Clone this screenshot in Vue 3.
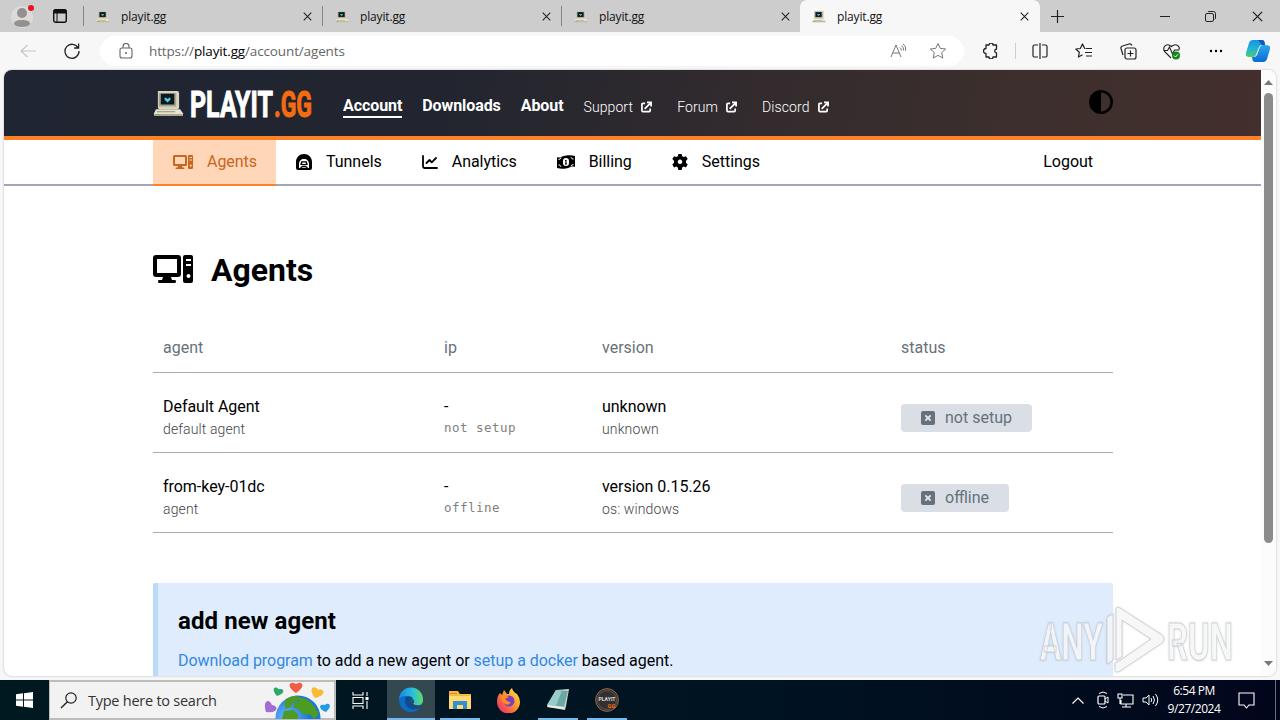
<template>
    <div class="desktop">
        <svg class="defs" width="0" height="0">
            <defs>
                <symbol id="computer" viewBox="0 0 32 28">
                    <path d="M5 1h20a2 2 0 0 1 2 2v15a2 2 0 0 1-2 2H7a2 2 0 0 1-2-2z" fill="#d9d4bd" />
                    <path d="M6 3h18v14H6z" fill="#a7a38e" />
                    <path d="M8 4h14v11H8z" fill="#0b1a1e" />
                    <path d="M12 8h2v1h2V8h2v2l-3 3-3-3z" fill="#55cde8" />
                    <path d="M3 20h25l3 4v3H1v-3z" fill="#e9e4cf" />
                    <path d="M1 25h30v2H1z" fill="#aaa58e" />
                    <path d="M4 22h19v1H4z" fill="#918d78" />
                    <path d="M3 25h4v1H3z" fill="#70b53b" />
                </symbol>
                <symbol id="agents" viewBox="0 0 40 28">
                    <path fill-rule="evenodd" fill="currentColor" d="M3 0h22a3 3 0 0 1 3 3v16a3 3 0 0 1-3 3h-7l1 3h3a1.600 1.600 0 0 1 0 3H6a1.600 1.600 0 0 1 0-3h3l1-3H3a3 3 0 0 1-3-3V3a3 3 0 0 1 3-3zm1 4v14h20V4zM32 0h6a2 2 0 0 1 2 2v24a2 2 0 0 1-2 2h-6a2 2 0 0 1-2-2V2a2 2 0 0 1 2-2zm1 4v2h5V4zm0 5v2h5V9zm2.500 10a2 2 0 1 0 .01 0z" />
                </symbol>
                <symbol id="tunnels" viewBox="0 0 16 16">
                    <path fill="currentColor" fill-rule="evenodd" d="M8 0c4.500 0 8 3.500 8 8v6a2 2 0 0 1-2 2H2a2 2 0 0 1-2-2V8c0-4.500 3.500-8 8-8zM8 5C5 5 3 7 3 10v4h10v-4c0-3-2-5-5-5z" />
                    <path fill="currentColor" d="M5.200 7.300h5.600l1 3.700H4.200z" />
                    <path fill="#fff" d="M6.500 8.500h3l.5 1.500H6z" />
                    <path stroke="currentColor" stroke-width="1.300" d="M4.500 14l2-1.500h3l2 1.500" fill="none" />
                </symbol>
                <symbol id="analytics" viewBox="0 0 16 16">
                    <path fill="none" stroke="currentColor" stroke-width="1.800" stroke-linecap="round" stroke-linejoin="round" d="M1 2v10.500c0 1 .5 1.500 1.500 1.500H15M4.500 9L7.500 6l2.300 2.300L14 4" />
                </symbol>
                <symbol id="billing" viewBox="0 0 18 16">
                    <path fill="currentColor" d="M0 3c3 1.500 5-.8 9-1.400 3-.5 6-.4 9 .4v11c-3-1.500-5 .8-9 1.400-3 .5-6 .4-9-.4z" />
                    <rect x="6" y="4" width="6" height="8" rx="3" fill="#fff" />
                    <path d="M8 6h1.500v3.500H10v1H8v-1h.4V7H8z" fill="currentColor" />
                    <path d="M1.500 5.500q2 0 2.500-2M16.500 10.500q-2 0-2.500 2M1.500 10.800q2 0 2.500 2M16.500 5.200q-2 0-2.500-2" stroke="#fff" fill="none" />
                </symbol>
                <symbol id="settings" viewBox="0 0 16 16">
                    <path fill="currentColor" fill-rule="evenodd" d="M6.300 0h3.400l.5 2.300 1.500.8 2.200-.8L15.700 5 14 6.700v2.100l1.700 1.700-1.800 2.900-2.200-.8-1.500.8-.5 2.600H6.300l-.5-2.600-1.500-.8-2.200.8L.3 10.500 2 8.800V6.700L.3 5l1.800-2.700 2.200.8 1.500-.8zM8 5.500a2.300 2.300 0 1 0 .01 0z" />
                </symbol>
                <symbol id="close" viewBox="0 0 10 10">
                    <path d="M.8.800l8.400 8.400M9.200.800L.8 9.200" stroke="#222" stroke-width="1.200" />
                </symbol>
            </defs>
        </svg>

        <div class="tabbar">
            <div class="profile">
                <svg width="24" height="26" viewBox="0 0 24 26">
                    <circle cx="11" cy="13" r="11" fill="#dedad7" />
                    <circle cx="11" cy="9" r="5" fill="#929090" />
                    <path d="M3 20c0-3 3-4 8-4s8 1 8 4c-1 2-4 3-8 3s-7-1-8-3z" fill="#929090" />
                    <circle cx="20" cy="4" r="3" fill="#e81123" />
                </svg>
                <svg width="14" height="14" viewBox="0 0 14 14">
                    <rect x=".7" y=".7" width="12.600" height="12.600" rx="2" fill="none" stroke="#111" stroke-width="1.400" />
                    <path d="M1 1h12v3H1zM4 4v9" fill="#111" stroke="#111" />
                </svg>
            </div>
            <div v-for="n in 4" :key="n" class="tab" :class="{ active: n === 4 }">
                <svg class="favicon"><use href="#computer" /></svg>
                <span>playit.gg</span>
                <svg class="close"><use href="#close" /></svg>
            </div>
            <div class="window-buttons">
                <svg width="15" height="15" viewBox="0 0 15 15"><path d="M7.500 1v13M1 7.500h13" stroke="#222" stroke-width="1.200" /></svg>
                <svg width="11" height="11" viewBox="0 0 11 11"><path d="M0 5.500h10" stroke="#222" /></svg>
                <svg width="11" height="11" viewBox="0 0 11 11"><rect x=".5" y="2.500" width="8" height="8" rx="1.500" fill="none" stroke="#222" /><path d="M3 1Q3 .5 4 .5h4.500a2 2 0 0 1 2 2V7q0 1-.8 1.300" fill="none" stroke="#222" /></svg>
                <svg width="11" height="11" viewBox="0 0 10 10"><use href="#close" /></svg>
            </div>
        </div>

        <div class="toolbar">
            <div class="history">
                <svg width="16" height="14" viewBox="0 0 16 14"><path d="M7.500 1L1 7l6.500 6M1 7h15" fill="none" stroke="#c4c4c4" stroke-width="1.100" /></svg>
                <svg width="16" height="16" viewBox="0 0 16 16"><path d="M14.200 5A7 7 0 1 0 15 8M14.600.5V5h-4.500" fill="none" stroke="#222" stroke-width="1.300" /></svg>
            </div>
            <div class="address">
                <svg width="14" height="16" viewBox="0 0 14 16"><rect x="1" y="5" width="12" height="10" rx="2" fill="none" stroke="#666" stroke-width="1.100" /><path d="M4 5V3.500a3 3 0 0 1 6 0V5" fill="none" stroke="#666" stroke-width="1.100" /><circle cx="7" cy="10" r="1" fill="#666" /></svg>
                <span class="url">https://<b>playit.gg</b>/account/agents</span>
                <svg width="17" height="16" viewBox="0 0 17 16"><path d="M1 14L6 2l5 12M2.700 10h6.600M10 4.500q1.500 1.200 1.200 3M11.500 2.500q2.600 2 2 5M13 .8q3.600 2.800 2.600 7" fill="none" stroke="#777" /></svg>
                <svg width="18" height="18" viewBox="0 0 18 18"><path d="M9 1.500l2.300 4.900 5.400.6-4 3.600 1.100 5.400L9 13.400 4.200 16l1.100-5.400-4-3.600 5.400-.6z" fill="none" stroke="#777" stroke-linejoin="round" /></svg>
            </div>
            <div class="tools">
                <svg width="16" height="16" viewBox="0 0 16 16"><path d="M3 2h3a2 2 0 0 1 4 0h3.500v4.200a1.700 1.700 0 0 0 0 3.600V14H10a2 2 0 0 1-4 0H3v-3.500a2.500 2.500 0 0 1 0-5z" fill="none" stroke="#222" stroke-width="1.300" stroke-linejoin="round" /></svg>
                <i class="divider"></i>
                <svg width="16" height="16" viewBox="0 0 16 16"><path d="M6 2H2.500a1.500 1.500 0 0 0-1.500 1.500v9A1.500 1.500 0 0 0 2.500 14H6M10 2h3.500A1.500 1.500 0 0 1 15 3.500v9a1.500 1.500 0 0 1-1.500 1.500H10M8 0v16" fill="none" stroke="#222" stroke-width="1.200" /></svg>
                <svg width="18" height="16" viewBox="0 0 18 16"><path d="M10.500 5.500H9.700L7.500 1 5.300 5.500.8 6l3.500 3.300L3.400 14l4.100-2.200M11 5.500h6M10 9.500h7M11 13h6" fill="none" stroke="#222" stroke-width="1.200" stroke-linejoin="round" /></svg>
                <svg width="17" height="17" viewBox="0 0 17 17"><rect x="5" y="5" width="11" height="11" rx="2" fill="none" stroke="#222" stroke-width="1.200" /><path d="M10.500 7.500v6M7.500 10.500h6M3 12L1 5.500Q.5 3.500 2.500 3L9 1q2-.5 3 1.500" fill="none" stroke="#222" stroke-width="1.200" /></svg>
                <svg width="18" height="17" viewBox="0 0 18 17"><path d="M8 15L1.500 8.500C-1 3.500 4-.5 8.500 3.500 13-.5 18 3.500 15.500 7.500M1 7.500h3.500L6.500 4l3 7 2-4h4" fill="none" stroke="#222" stroke-width="1.100" /><circle cx="13" cy="12.500" r="4" fill="#16851d" /><path d="M11 12.500l1.500 1.500 2.500-2.700" stroke="#fff" fill="none" /></svg>
                <svg width="16" height="4" viewBox="0 0 16 4"><circle cx="3" cy="2" r="1.200" /><circle cx="8" cy="2" r="1.200" /><circle cx="13" cy="2" r="1.200" /></svg>
                <svg width="24" height="24" viewBox="0 0 24 24">
                    <defs>
                        <linearGradient id="cop1" x1="0" y1="0" x2="0" y2="1"><stop stop-color="#1790e8" /><stop offset=".55" stop-color="#22b8cf" /><stop offset="1" stop-color="#52cb73" /></linearGradient>
                        <linearGradient id="cop2" x1="0" y1="0" x2="0" y2="1"><stop stop-color="#2fa8ec" /><stop offset="1" stop-color="#086bd5" /></linearGradient>
                    </defs>
                    <path d="M7 1h9q2 0 2.500 2L19 6h-3q-2 0-3 2l-3 8q-1 2-3 2H3q-4 0-3-4L3 4q1-3 4-3z" fill="url(#cop1)" />
                    <path d="M17 6h3q5 0 4 4l-3 10q-1 3-4 3H9q-2 0-2.500-2L6 18h2q2 0 3-2l3-8q1-2 3-2z" fill="url(#cop2)" />
                    <path d="M12 1h4q2 0 2.500 2L19 6h-3q-2-2-4-5z" fill="#1857ba" />
                </svg>
            </div>
        </div>

        <div class="viewport">
            <div class="page">
                <header class="site-header">
                    <div class="container header-row">
                        <svg class="logo" width="162" height="52" viewBox="0 -10 162 52">
                            <use href="#computer" x="0" y="2" width="31" height="27" />
                            <text class="logo-text" x="37" y="28.500" textLength="83" lengthAdjust="spacingAndGlyphs">PLAYIT</text>
                            <text class="logo-text accent" x="121" y="28.500" textLength="38" lengthAdjust="spacingAndGlyphs">.GG</text>
                        </svg>
                        <nav class="main-links">
                            <a class="current">Account</a>
                            <a>Downloads</a>
                            <a>About</a>
                        </nav>
                        <nav class="external-links">
                            <a v-for="link in externalLinks" :key="link">
                                <span>{{ link }}</span>
                                <svg width="11" height="12" viewBox="0 0 12 12"><path d="M4.500 2H2.200Q1 2 1 3.200v6.600Q1 11 2.200 11h6.600Q10 11 10 9.800V7.500M4 8l6-6M6.500 1H11v4.500" fill="none" stroke="#fff" stroke-width="1.900" /></svg>
                            </a>
                        </nav>
                        <svg class="contrast" width="24" height="24" viewBox="0 0 24 24"><circle cx="12" cy="12" r="10.700" fill="none" stroke="#000" stroke-width="2.600" /><path d="M12 1a11 11 0 0 0 0 22z" /></svg>
                    </div>
                </header>
                <div class="subnav">
                    <div class="container subnav-row">
                        <a v-for="item in sections" :key="item.label" :class="{ selected: item.label === 'Agents' }">
                            <svg :class="item.icon"><use :href="'#' + item.icon" /></svg>
                            <span>{{ item.label }}</span>
                        </a>
                        <a class="logout">Logout</a>
                    </div>
                </div>
                <main class="container content">
                    <h1><svg width="40" height="28"><use href="#agents" /></svg><span>Agents</span></h1>
                    <table>
                        <thead>
                            <tr><th>agent</th><th>ip</th><th>version</th><th>status</th></tr>
                        </thead>
                        <tbody>
                            <tr v-for="agent in agents" :key="agent.name">
                                <td><p>{{ agent.name }}</p><small>{{ agent.type }}</small></td>
                                <td><p>-</p><small class="mono">{{ agent.status }}</small></td>
                                <td><p>{{ agent.version }}</p><small>{{ agent.os }}</small></td>
                                <td>
                                    <span class="badge">
                                        <svg width="14" height="14" viewBox="0 0 14 14"><rect width="14" height="14" rx="2" fill="#66717c" /><path d="M4.300 4.300l5.400 5.400M9.700 4.300L4.300 9.700" stroke="#e2e8ed" stroke-width="1.800" /></svg>
                                        <span>{{ agent.status }}</span>
                                    </span>
                                </td>
                            </tr>
                        </tbody>
                    </table>
                    <section class="notice">
                        <h2>add new agent</h2>
                        <p><a>Download program</a> to add a new agent or <a>setup a docker</a> based agent.</p>
                    </section>
                </main>
            </div>
            <div class="scrollbar">
                <svg width="9" height="5" viewBox="0 0 9 5"><path d="M4.500 0L9 5H0z" fill="#777" /></svg>
                <div class="thumb"></div>
                <svg class="down" width="9" height="5" viewBox="0 0 9 5"><path d="M4.500 5L9 0H0z" fill="#777" /></svg>
            </div>
        </div>

        <svg class="watermark" width="214" height="74" viewBox="0 0 214 74">
            <g fill="#fff" fill-opacity=".75" stroke="#c4c6cb" stroke-opacity=".75">
                <text x="6" y="56" textLength="63" lengthAdjust="spacingAndGlyphs">ANY</text>
                <text x="133" y="56" textLength="66" lengthAdjust="spacingAndGlyphs">RUN</text>
                <path fill-rule="evenodd" d="M82 6q0-4 4-2l42 27q4 4 0 8L86 67q-5 3-5-2v-6l6-3 30-21-29-19v37l-6 3z" />
                <path d="M73 13l6-3v46l-6 4z" />
            </g>
        </svg>

        <footer class="taskbar">
            <div class="start">
                <svg width="17" height="16" viewBox="0 0 17 16"><path d="M0 2.300L7 1.300V7.500H0zM8 1.200L17 0v7.500H8zM0 8.500h7v6.200l-7-1zM8 8.500h9V16l-9-1.200z" fill="#fff" /></svg>
            </div>
            <div class="search">
                <svg width="18" height="17" viewBox="0 0 18 17"><circle cx="11" cy="6" r="5.200" fill="none" stroke="#222" stroke-width="1.200" /><path d="M7.400 9.700L1 16" stroke="#222" stroke-width="1.400" /></svg>
                <span>Type here to search</span>
                <svg class="globe" width="72" height="38" viewBox="0 0 72 38">
                    <defs><radialGradient id="sea" cx=".25"><stop stop-color="#71b7ff" /><stop offset="1" stop-color="#1978dc" /></radialGradient></defs>
                    <circle cx="36" cy="37" r="22.500" fill="url(#sea)" />
                    <path d="M23 19q7-5 13-4l-1 5-4 2-2 4-6 2zM34 16q12 0 18 9l5 8-5 5-4-5-6 1-6-6-5-1 2-5 4-2zM22 30l9-1 5 4v5H20z" fill="#4d9b22" />
                    <path d="M0 0C-8-5-5-10 0-7 5-10 8-5 0 0z" transform="translate(34 12) scale(1.300)" fill="#f05d45" />
                    <path d="M0 0C-8-5-5-10 0-7 5-10 8-5 0 0z" transform="translate(15 15) rotate(15)" fill="#2aa969" />
                    <path d="M0 0C-8-5-5-10 0-7 5-10 8-5 0 0z" transform="translate(53 17) rotate(20) scale(1.250)" fill="#f8b934" />
                    <path d="M0 0C-8-5-5-10 0-7 5-10 8-5 0 0z" transform="translate(4 31) rotate(40) scale(1.300)" fill="#a46bd2" />
                    <path d="M0 0C-8-5-5-10 0-7 5-10 8-5 0 0z" transform="translate(64 31) rotate(-10)" fill="#239ae5" />
                </svg>
            </div>
            <div class="app task-view">
                <svg width="17" height="17" viewBox="0 0 17 17"><path d="M1 0v3h10V0M1 17v-3h10v3M1 5.500h10v6H1zM15 0v4M15 9v8" fill="none" stroke="#fff" stroke-width="1.100" /><path d="M13.500 5h3v3h-3z" fill="#fff" /></svg>
            </div>
            <div class="app running focused">
                <svg width="26" height="26" viewBox="0 0 26 26">
                    <defs>
                        <linearGradient id="edge1"><stop stop-color="#1985dc" /><stop offset=".55" stop-color="#27bfe0" /><stop offset="1" stop-color="#62db65" /></linearGradient>
                    </defs>
                    <circle cx="13" cy="13" r="12" fill="#0b6bc5" />
                    <path d="M1 12A12 12 0 0 1 25 13c0 5-5 7-10 4-1-2 2-3 0-5C12 8 4 8 1 12z" fill="url(#edge1)" />
                    <path d="M8 10q4-2 7 1-3 1-2 4 3 5 11 3l-2 3Q12 25 8 18q-2-5 0-8z" fill="#114b8c" />
                    <path d="M14 12q4 2 1 5 4 3 10 1v2q-10 2-12-5z" fill="#344a53" />
                </svg>
            </div>
            <div class="app running">
                <svg width="22" height="20" viewBox="0 0 22 20"><path d="M0 1h9l2 3h11v15H0z" fill="#f4b93e" /><path d="M1 3h7v1H1z" fill="#e18c20" /><path d="M0 6h22v13H0z" fill="#ffda70" /><path d="M4 11h14v8h-4v-4H8v4H4z" fill="#3190d2" /></svg>
            </div>
            <div class="app">
                <svg width="25" height="25" viewBox="0 0 25 25">
                    <defs><linearGradient id="fox" x1="1" y1="0" x2="0" y2="1"><stop stop-color="#fff250" /><stop offset=".45" stop-color="#ff942a" /><stop offset="1" stop-color="#ed1973" /></linearGradient></defs>
                    <path d="M4 5l2 2 2-5 3 4h2q0-4 3-6 1 4 5 6 3 4 3 8a11.500 11.500 0 0 1-23 0q0-6 3-9z" fill="url(#fox)" />
                    <circle cx="13" cy="13" r="5.500" fill="#7940bd" /><path d="M5 8q5-1 8 1l-4 2q2 3 6 3-2 4-6 2-4-3-4-8z" fill="#ff8b22" />
                </svg>
            </div>
            <div class="app running">
                <svg width="24" height="24" viewBox="0 0 24 24"><path d="M10 2l13-1-3 17-1 4-18-3z" fill="#d2d7cb" /><path d="M10 2l12 1-4 16L1 17z" fill="#6aa8a8" /><path d="M10 2l6 .5-6 15.500-9-1z" fill="#9acaca" /><path d="M1 17l17 2v2L2 19z" fill="#e8eee9" /></svg>
            </div>
            <div class="app running">
                <svg width="24" height="24" viewBox="0 0 24 24"><circle cx="12" cy="12" r="11.400" fill="#34302f" stroke="#9c663d" /><circle cx="12" cy="12" r="9.500" fill="none" stroke="#555" /><text x="3.500" y="13" class="app-text" textLength="17" lengthAdjust="spacingAndGlyphs">PLAYIT</text><text x="12.500" y="20" class="app-text accent" textLength="8" lengthAdjust="spacingAndGlyphs">GG</text></svg>
            </div>
            <div class="tray">
                <svg width="12" height="7" viewBox="0 0 12 7"><path d="M.5 6.500L6 1l5.500 5.500" fill="none" stroke="#fff" stroke-width="1.200" /></svg>
                <svg width="12" height="18" viewBox="0 0 12 18"><rect x="1" y="5" width="7" height="8" rx="1" fill="none" stroke="#fff" stroke-width="1.200" /><path d="M8 8l3-2v6l-3-2M2 2.500q4-3 8 0M2 15.500q4 3 8 0" fill="none" stroke="#fff" /></svg>
                <svg width="17" height="15" viewBox="0 0 17 15"><path d="M6 2h10v9H4V7M9 11v3M5 14h9M1 1h4v4H1zM3 5v6" fill="none" stroke="#fff" stroke-width="1.100" /></svg>
                <svg width="17" height="16" viewBox="0 0 17 16"><path d="M1 6h3l3-3v10l-3-3H1zM9 6q1.500 2 0 4M11 4q3 4 0 8M13.500 2q4.500 6 0 12" fill="none" stroke="#fff" /></svg>
            </div>
            <div class="clock"><span>6:54 PM</span><span>9/27/2024</span></div>
            <svg class="notify" width="17" height="17" viewBox="0 0 17 17"><path d="M1 1h15v12h-5l-2.500 3L6 13H1z" fill="none" stroke="#fff" stroke-width="1.100" /></svg>
            <i class="show-desktop"></i>
        </footer>
    </div>
</template>

<script setup>
const externalLinks = ['Support', 'Forum', 'Discord'];

const sections = [
    { label: 'Agents', icon: 'agents' },
    { label: 'Tunnels', icon: 'tunnels' },
    { label: 'Analytics', icon: 'analytics' },
    { label: 'Billing', icon: 'billing' },
    { label: 'Settings', icon: 'settings' },
];

const agents = [
    { name: 'Default Agent', type: 'default agent', status: 'not setup', version: 'unknown', os: 'unknown' },
    { name: 'from-key-01dc', type: 'agent', status: 'offline', version: 'version 0.15.26', os: 'os: windows' },
];
</script>

<style>
body {
    overflow: hidden;
}
</style>

<style scoped>
* {
    box-sizing: border-box;
}

svg {
    display: block;
    flex-shrink: 0;
}

.defs {
    position: absolute;
}

.desktop {
    position: relative;
    width: 1280px;
    height: 720px;
    display: flex;
    flex-direction: column;
    background: #f7f7f7;
    font-family: "Open Sans", "Noto Sans", sans-serif;
    overflow: hidden;
}

.tabbar {
    display: flex;
    height: 32px;
    background: #cdcdcd;
    flex-shrink: 0;
}

.profile {
    width: 83px;
    display: flex;
    gap: 18px;
    padding: 4px 0 0 11px;
}

.profile svg:last-child {
    margin-top: 5px;
}

.tab {
    width: 239px;
    display: flex;
    align-items: center;
    padding: 0 10px 0 13px;
    font-size: 12px;
    color: #111;
    background: linear-gradient(#858585, #858585) left 6px / 1px 20px no-repeat;
}

.tab span {
    flex: 1;
    letter-spacing: -0.15px;
}

.tab.active {
    width: 240px;
    background: #f7f7f7;
    border-radius: 7px 7px 0 0;
    padding-right: 11px;
    padding-left: 12px;
}

.favicon {
    width: 14px;
    height: 13px;
    margin-right: 11px;
}

.close {
    width: 9px;
    height: 9px;
}

.window-buttons {
    display: flex;
    align-items: center;
    padding-left: 10px;
}

.window-buttons svg:nth-child(2) {
    margin-left: 95px;
}

.window-buttons svg:nth-child(3) {
    margin-left: 34px;
}

.window-buttons svg:nth-child(4) {
    margin-left: 36px;
}

.toolbar {
    display: flex;
    align-items: center;
    height: 38px;
    flex-shrink: 0;
}

.history {
    width: 100px;
    display: flex;
    align-items: center;
    gap: 28px;
    padding-left: 20px;
}

.address {
    width: 864px;
    height: 30px;
    display: flex;
    align-items: center;
    background: #fff;
    border-radius: 15px;
    padding: 0 17px 0 19px;
}

.address svg:nth-of-type(2) {
    margin-right: 22px;
}

.url {
    flex: 1;
    margin-left: 16px;
    font-size: 13.500px;
    color: #666;
    letter-spacing: -0.140px;
}

.url b {
    font-weight: 400;
    color: #000;
}

.tools {
    display: grid;
    grid-template-columns: 44px 5px repeat(5, 44px) 40px;
    align-items: center;
    justify-items: center;
    padding-left: 5px;
}

.divider {
    width: 1px;
    height: 16px;
    background: #ccc;
}

.viewport {
    display: flex;
    height: 606px;
    margin: 0 4px;
    background: #fff;
    border-radius: 8px;
    overflow: hidden;
    flex-shrink: 0;
    box-shadow: 0 0 2px #aaa;
}

.page {
    width: 1257px;
    overflow: hidden;
    font-family: Roboto, sans-serif;
    font-size: 16px;
    color: #000;
}

.scrollbar {
    width: 15px;
    display: flex;
    flex-direction: column;
    align-items: center;
    background: #fcfcfc;
    padding-top: 10px;
}

.thumb {
    width: 9px;
    height: 450px;
    background: #8b8b8b;
    border-radius: 5px;
    margin-top: 8px;
}

.down {
    margin-top: auto;
    margin-bottom: 10px;
}

.container {
    width: 960px;
    margin-left: 149px;
}

.site-header {
    height: 70px;
    background: linear-gradient(100deg, #202533 0%, #22252f 35%, #332b2e 60%, #3c2f2d 80%, #432f2d 100%);
    border-bottom: 4px solid #ff8127;
}

.header-row {
    display: flex;
    align-items: center;
    height: 66px;
    padding-top: 1px;
    color: #fff;
}

.logo-text {
    font-family: Roboto, sans-serif;
    font-size: 36px;
    font-weight: 700;
    fill: #fff;
    stroke: #fff;
    stroke-width: 1;
}

.logo-text.accent {
    fill: #f56b10;
    stroke: #f56b10;
}

.main-links,
.external-links {
    display: flex;
    gap: 20px;
    margin-left: 28px;
}

.main-links a {
    font-weight: 700;
    line-height: 20px;
    margin-top: 7px;
    letter-spacing: -0.080px;
    border-bottom: 2px solid transparent;
}

.main-links .current {
    border-color: #fff;
}

.external-links {
    gap: 25px;
    margin-left: 20px;
}

.external-links a {
    display: flex;
    align-items: center;
    gap: 8px;
    font-size: 14px;
    font-weight: 300;
    letter-spacing: 0.100px;
    margin-top: 7px;
}

.contrast {
    margin-left: auto;
    margin-top: -3px;
}

.subnav {
    height: 46px;
    border-bottom: 2px solid #a5a5b3;
}

.subnav-row {
    display: flex;
    height: 46px;
}

.subnav-row a {
    display: flex;
    align-items: center;
    padding: 0 20px 3px;
    letter-spacing: -0.030px;
}

.subnav-row a svg {
    width: 16px;
    height: 16px;
    margin-right: 14px;
}

.subnav-row .agents {
    width: 20px;
    height: 14px;
}

.subnav-row .billing {
    width: 18px;
}

.subnav-row .selected {
    width: 123px;
    color: #c8661e;
    background: #ffd6b8;
    border-bottom: 2px solid #ff8127;
    padding-bottom: 1px;
}

.subnav-row .logout {
    margin-left: auto;
}

.content h1 {
    height: 38px;
    margin: 65px 0 39px;
    display: flex;
    align-items: center;
    gap: 18px;
    font-size: 32px;
    font-weight: 700;
}

.content h1 svg {
    margin-top: -2px;
}

table {
    width: 100%;
    border-collapse: separate;
    border-spacing: 0;
    table-layout: fixed;
}

th,
td {
    text-align: left;
    padding: 0 10px;
    border-bottom: 1px solid #aaa;
}

th {
    height: 45px;
    padding-bottom: 5px;
    font-weight: 400;
    color: #68717b;
}

th:nth-child(1) {
    width: 281px;
}

th:nth-child(2) {
    width: 158px;
}

th:nth-child(3) {
    width: 299px;
}

td {
    height: 80px;
    padding-top: 11px;
}

td p,
.notice p {
    margin: 0;
    line-height: 22px;
    letter-spacing: -0.035px;
}

td small {
    display: block;
    font-size: 14px;
    line-height: 22px;
    font-weight: 300;
    letter-spacing: 0.120px;
    color: #444;
}

td .mono {
    font-family: "DejaVu Sans Mono", monospace;
    font-size: 12.500px;
    letter-spacing: 0.480px;
    font-weight: 400;
    line-height: 20px;
    color: #808080;
    padding-bottom: 2px;
}

.badge {
    display: inline-flex;
    align-items: center;
    gap: 10px;
    height: 28px;
    padding: 0 20px;
    border-radius: 4px;
    background: #d9dfe5;
    color: #66717c;
}

.badge span {
    margin-top: -1px;
}

.notice {
    height: 140px;
    margin-top: 50px;
    padding: 23px 20px;
    border-left: 5px solid #b9dafb;
    border-radius: 2px;
    background: #deecfd;
}

.notice h2 {
    margin: 0 0 14px;
    font-size: 24px;
    line-height: 30px;
    font-weight: 700;
    letter-spacing: 0.080px;
}

.notice a {
    color: #3488df;
}

.watermark {
    position: absolute;
    left: 1034px;
    top: 604px;
    filter: drop-shadow(0 0 1px rgba(110, 120, 130, 0.300));
}

.watermark text {
    font-family: Roboto, sans-serif;
    font-size: 52px;
    font-weight: 700;
}

.taskbar {
    display: flex;
    height: 40px;
    margin-top: 4px;
    background: linear-gradient(90deg, #001820, #001322 60%, #02061c);
    color: #fff;
}

.start {
    width: 49px;
    display: flex;
    align-items: center;
    justify-content: center;
}

.search {
    width: 287px;
    height: 40px;
    display: flex;
    align-items: center;
    background: #f2f2f2;
    border: 2px solid #bdbdbd;
    border-left-width: 1px;
    padding-left: 10px;
    color: #333;
    font-size: 14.500px;
}

.search span {
    margin-left: 10px;
    white-space: nowrap;
    letter-spacing: -0.250px;
}

.globe {
    margin-left: auto;
}

.app {
    width: 49px;
    display: flex;
    align-items: center;
    justify-content: center;
    background: linear-gradient(#76b9ed, #76b9ed) center bottom / 0 2px no-repeat;
}

.app.running {
    background-size: 40px 2px;
}

.app.task-view {
    width: 51px;
    padding-right: 3px;
}

.app.focused {
    width: 48px;
    background-color: #344850;
    background-size: 48px 2px;
}

.app-text {
    font-family: Roboto, sans-serif;
    font-size: 6px;
    font-weight: 700;
    fill: #ddd;
}

.app-text.accent {
    fill: #f06c18;
}

.tray {
    display: flex;
    align-items: center;
    gap: 8px;
    margin-left: auto;
}

.tray svg:first-child {
    margin-right: 5px;
}

.clock {
    display: flex;
    flex-direction: column;
    align-items: center;
    width: 70px;
    font-size: 12px;
    line-height: 18px;
    padding-top: 2px;
    letter-spacing: -0.450px;
}

.notify {
    margin: 12px 20px 0 9px;
}

.show-desktop {
    width: 1px;
    background: #69717a;
    margin-right: 4px;
}
</style>
